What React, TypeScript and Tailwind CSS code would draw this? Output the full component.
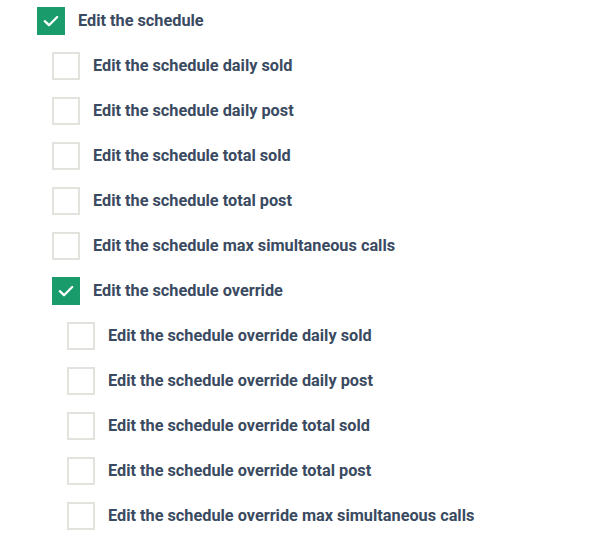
import React from "react";

type Item = { label: string; level: number; checked: boolean };

const items: Item[] = [
  { label: "Edit the schedule", level: 0, checked: true },
  { label: "Edit the schedule daily sold", level: 1, checked: false },
  { label: "Edit the schedule daily post", level: 1, checked: false },
  { label: "Edit the schedule total sold", level: 1, checked: false },
  { label: "Edit the schedule total post", level: 1, checked: false },
  { label: "Edit the schedule max simultaneous calls", level: 1, checked: false },
  { label: "Edit the schedule override", level: 1, checked: true },
  { label: "Edit the schedule override daily sold", level: 2, checked: false },
  { label: "Edit the schedule override daily post", level: 2, checked: false },
  { label: "Edit the schedule override total sold", level: 2, checked: false },
  { label: "Edit the schedule override total post", level: 2, checked: false },
  { label: "Edit the schedule override max simultaneous calls", level: 2, checked: false },
];

function Box({ checked }: { checked: boolean }) {
  if (checked) {
    return (
      <div className="w-[28px] h-[28px] bg-[#199b6c] flex items-center justify-center shrink-0">
        <svg width="16" height="16" viewBox="0 0 16 16" fill="none">
          <path d="M1.8 8.2 L6 12.2 L14.2 4" stroke="white" strokeWidth="2.3" strokeLinecap="round" strokeLinejoin="round" />
        </svg>
      </div>
    );
  }
  return <div className="w-[28px] h-[28px] border-2 border-[#e4e2dc] bg-white shrink-0" />;
}

export default function App() {
  return (
    <div className="bg-white w-[597px] h-[539px] pt-[7px] font-['Roboto',sans-serif]">
      <div className="flex flex-col gap-[17px]">
        {items.map((it, i) => (
          <div
            key={i}
            className={`flex items-center gap-[13px] ${it.level === 0 ? "pl-[37px]" : it.level === 1 ? "pl-[52px]" : "pl-[67px]"}`}
          >
            <Box checked={it.checked} />
            <span className="text-[16.3px] font-bold text-[#3a4a61] leading-[28px]">{it.label}</span>
          </div>
        ))}
      </div>
    </div>
  );
}
